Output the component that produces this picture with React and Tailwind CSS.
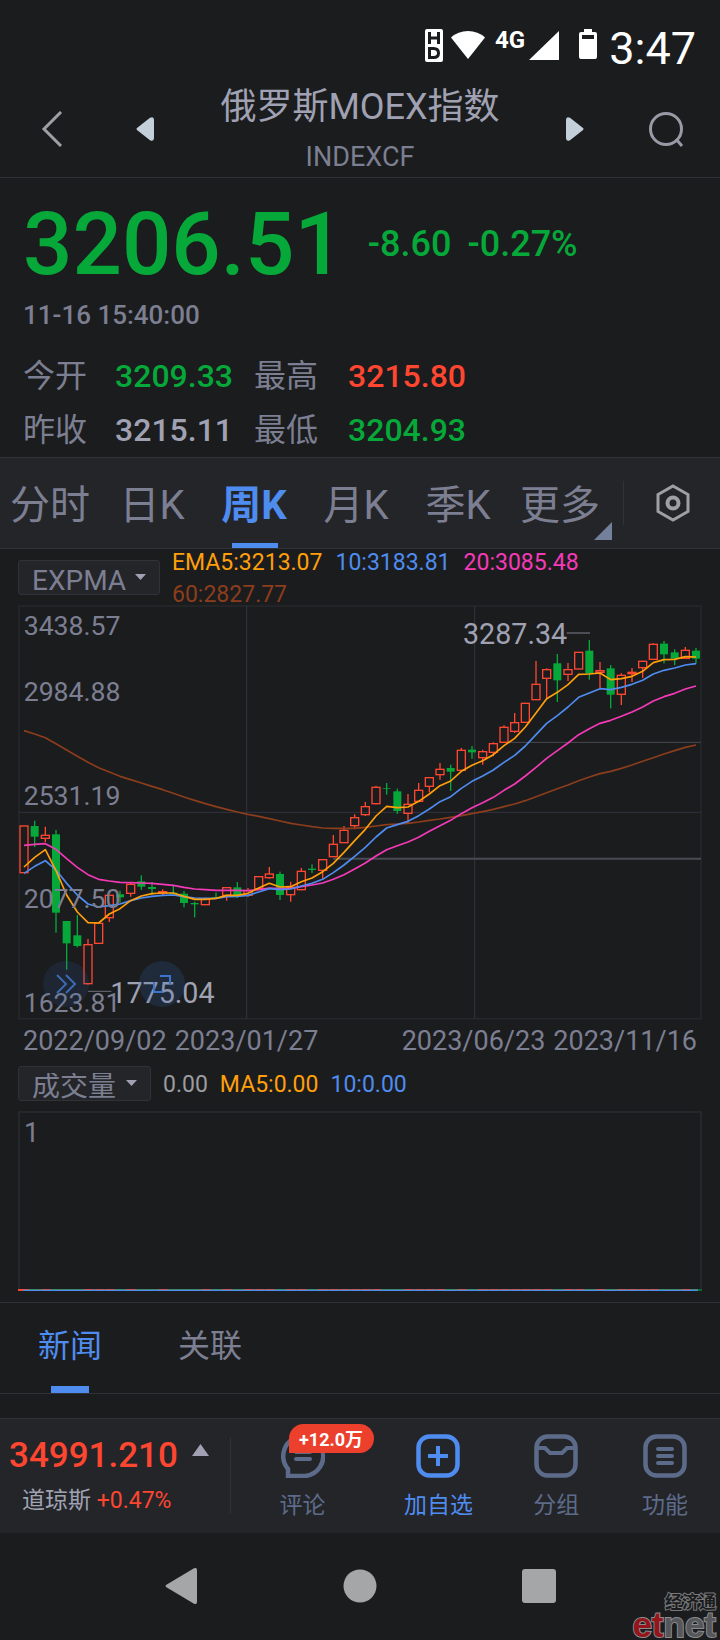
import React, { useState } from 'react';

// Each candle: [direction, wick top, body top, body bottom, wick bottom], one week per entry
const CANDLES = [
  ['up', 678, 678, 818, 818], ['down', 662, 678, 710, 741], ['up', 680, 706, 715, 727], ['down', 690, 703, 938, 998],
  ['down', 963, 963, 1030, 1109], ['down', 945, 1006, 1038, 1042], ['up', 1017, 1034, 1151, 1154], ['up', 970, 970, 1030, 1030],
  ['up', 886, 886, 953, 966], ['down', 872, 883, 892, 908], ['up', 850, 853, 880, 890], ['down', 826, 844, 860, 870],
  ['down', 846, 861, 867, 885], ['up', 868, 875, 879, 888], ['down', 857, 878, 883, 884], ['down', 873, 881, 909, 922],
  ['down', 905, 909, 913, 952], ['up', 893, 896, 914, 914], ['down', 878, 892, 895, 897], ['up', 862, 863, 886, 902],
  ['down', 846, 862, 885, 894], ['up', 864, 872, 886, 891], ['up', 828, 830, 866, 868], ['up', 801, 822, 833, 836],
  ['down', 815, 822, 885, 900], ['up', 845, 862, 884, 905], ['up', 804, 814, 869, 871], ['down', 793, 806, 810, 819],
  ['up', 777, 779, 811, 836], ['up', 705, 733, 770, 770], ['up', 678, 691, 728, 728], ['up', 643, 653, 677, 686],
  ['up', 606, 620, 644, 648], ['up', 557, 562, 611, 613], ['down', 549, 565, 567, 584], ['down', 566, 574, 633, 642],
  ['up', 582, 613, 640, 669], ['up', 549, 571, 604, 607], ['up', 531, 533, 559, 577], ['up', 489, 508, 524, 539],
  ['down', 494, 504, 515, 573], ['up', 444, 451, 511, 514], ['down', 438, 449, 457, 476], ['up', 449, 455, 473, 494],
  ['up', 427, 431, 457, 469], ['up', 376, 382, 427, 428], ['up', 339, 368, 394, 399], ['up', 310, 310, 367, 368],
  ['up', 183, 253, 299, 299], ['up', 205, 209, 235, 295], ['down', 162, 190, 241, 306], ['up', 189, 209, 223, 243],
  ['up', 156, 157, 207, 208], ['down', 120, 152, 221, 239], ['up', 186, 212, 217, 265], ['down', 195, 205, 284, 325],
  ['up', 220, 226, 283, 315], ['up', 204, 217, 221, 246], ['up', 182, 184, 203, 234], ['up', 130, 133, 178, 179],
  ['down', 123, 131, 163, 190], ['down', 148, 157, 176, 196], ['up', 141, 151, 175, 177], ['down', 144, 152, 176, 191]
];

const EMA5 = [
  801, 772, 749, 812, 885, 936, 968, 969, 942, 926, 902, 888, 881, 879, 879, 889, 898, 898, 895, 886, 886, 880,
  864, 850, 861, 860, 845, 834, 815, 790, 757, 722, 688, 648, 619, 623, 621, 604, 582, 557, 543, 514, 496, 482,
  464, 437, 415, 381, 339, 296, 277, 254, 223, 222, 219, 239, 236, 229, 214, 188, 179, 178, 170, 171
];

const EMA10 = [
  820, 799, 782, 810, 850, 885, 912, 921, 917, 912, 902, 894, 889, 886, 885, 890, 894, 895, 895, 890, 889, 886,
  876, 866, 869, 867, 858, 850, 838, 818, 795, 769, 742, 711, 684, 674, 664, 647, 627, 605, 590, 565, 544, 528,
  510, 487, 466, 438, 404, 370, 347, 321, 292, 279, 266, 269, 262, 253, 241, 222, 211, 204, 195, 191
];

const EMA20 = [
  736, 733, 731, 748, 776, 802, 824, 838, 843, 847, 848, 849, 850, 853, 856, 862, 867, 869, 871, 871, 871, 872,
  869, 864, 866, 865, 860, 855, 849, 838, 824, 807, 789, 768, 749, 737, 726, 712, 694, 677, 661, 641, 623, 608,
  592, 571, 552, 528, 502, 475, 452, 429, 404, 386, 370, 361, 349, 336, 321, 303, 290, 280, 267, 258
];

const EMA60 = [
  392, 402, 413, 431, 450, 469, 487, 503, 516, 529, 539, 549, 559, 569, 580, 591, 601, 611, 620, 628, 636, 643,
  649, 656, 663, 670, 675, 680, 684, 685, 685, 685, 682, 678, 674, 672, 670, 666, 661, 657, 652, 647, 641, 635,
  628, 620, 612, 602, 590, 578, 566, 555, 542, 531, 521, 514, 505, 495, 484, 473, 462, 452, 442, 435
];

const AXIS = [
  ['3438.57', 106],
  ['2984.88', 304],
  ['2531.19', 616],
  ['2077.50', 925],
  ['1623.81', 1237]
];

const PERIODS = ['分时', '日K', '周K', '月K', '季K', '更多'];

const candleX = (i) => 72 + i * 32;
const toPoints = (values) => values.map((y, i) => `${candleX(i)},${y}`).join(' ');

function StatusBar() {
  return (
    <div className="h-20 flex justify-end items-start pt-[29px] pr-6 text-white">
      <svg className="w-[18px] h-[33px]" viewBox="0 0 18 33">
        <rect width="18" height="33" rx="2" fill="#fff" />
        <path d="M4.500 3v12M13.500 3v12M4.500 9h9" stroke="#1b1c1e" strokeWidth="3" fill="none" />
        <path d="M4.500 19.500v9h4q5 0 5-4.500t-5-4.500z" stroke="#1b1c1e" strokeWidth="3" fill="none" />
      </svg>
      <svg className="w-[34px] h-[30px] ml-2" viewBox="0 0 34 30">
        <path d="M17 30L0 8.500Q7 2 17 2t17 6.500z" fill="#fff" />
      </svg>
      <span className="ml-2.5 text-2xl leading-[22px] font-bold">4G</span>
      <svg className="w-[30px] h-[31px] ml-1" viewBox="0 0 30 31">
        <path d="M30 2v29H0z" fill="#fff" />
      </svg>
      <svg className="w-[18px] h-[30px] ml-5" viewBox="0 0 18 30">
        <path d="M5 0h8v3h3q2 0 2 2v23q0 2-2 2H2q-2 0-2-2V5q0-2 2-2h3z" fill="#fff" />
        <path d="M3 6h12v4H3z" fill="#1b1c1e" />
      </svg>
      <span className="ml-3 text-[45px] leading-[39px]">3:47</span>
    </div>
  );
}

function Header() {
  return (
    <header className="h-[98px] border-b border-[#303238] flex items-center justify-between px-9">
      <div className="flex items-center gap-[68px]">
        <button type="button" aria-label="返回">
          <svg className="w-8 h-9" viewBox="0 0 32 36" fill="none" stroke="#a09fa6" strokeWidth="3">
            <path d="M25 1L8 18l17 17" />
          </svg>
        </button>
        <button type="button" aria-label="上一个">
          <svg className="w-[18px] h-6" viewBox="0 0 18 24" fill="#c3cfda">
            <path d="M1 11L14 .8Q18 -1 18 3v18q0 4-4 2.200L1 13q-1-1 0-2z" />
          </svg>
        </button>
      </div>
      <div className="text-center pt-1">
        <h1 className="text-4xl leading-[52px] text-[#a0a2b3]">俄罗斯MOEX指数</h1>
        <p className="text-[27px] leading-[48px] text-[#7c7f91]">INDEXCF</p>
      </div>
      <div className="flex items-center gap-16">
        <button type="button" aria-label="下一个">
          <svg className="w-[18px] h-6" viewBox="0 0 18 24" fill="#c3cfda">
            <path d="M17 11L4 .8Q0 -1 0 3v18q0 4 4 2.200L17 13q1-1 0-2z" />
          </svg>
        </button>
        <button type="button" aria-label="搜索">
          <svg className="w-9 h-9" viewBox="0 0 36 36" fill="none" stroke="#9a99a6" strokeWidth="3">
            <circle cx="18" cy="18" r="15.500" />
            <path d="M28 28l6 7" />
          </svg>
        </button>
      </div>
    </header>
  );
}

function Quote() {
  return (
    <section className="pt-[23px] px-[23px] font-medium">
      <div className="flex items-center text-[#06a839]">
        <span className="text-[87px] leading-[84px]">3206.51</span>
        <span className="text-[36px] leading-[86px] ml-6">-8.60</span>
        <span className="text-[36px] leading-[86px] ml-4">-0.27%</span>
      </div>
      <p className="mt-3 text-[26px] leading-8 text-[#7c7f91]">11-16 15:40:00</p>
      <dl className="mt-[18px] grid grid-cols-[92px_139px_94px_1fr] text-[32px] leading-[54px] text-[#06a839]">
        <dt className="font-normal text-[#7c7f91]">今开</dt>
        <dd>3209.33</dd>
        <dt className="font-normal text-[#7c7f91]">最高</dt>
        <dd className="text-[#fe4630]">3215.80</dd>
        <dt className="font-normal text-[#7c7f91]">昨收</dt>
        <dd className="text-[#a0a2b3]">3215.11</dd>
        <dt className="font-normal text-[#7c7f91]">最低</dt>
        <dd>3204.93</dd>
      </dl>
    </section>
  );
}

function PeriodTabs({ period, setPeriod }) {
  return (
    <nav className="h-[92px] flex items-center bg-[#242529] border-y border-[#303238]">
      <div className="h-full grow-[612] basis-0 grid grid-cols-6">
        {PERIODS.map((name) => (
          <button
            key={name}
            type="button"
            onClick={() => setPeriod(name)}
            className={`relative pt-1.5 pr-0.5 text-[40px] whitespace-nowrap ${
              period === name ? 'font-bold text-[#4f8cf0]' : 'text-[#7c7f91]'
            }`}
          >
            {name}
            {period === name && (
              <span className="absolute bottom-0 left-1/2 -translate-x-1/2 w-[46px] h-[5px] bg-[#4f8cf0]" />
            )}
            {name === '更多' && (
              <svg className="absolute right-0 bottom-2 w-[18px] h-[18px]" viewBox="0 0 18 18" fill="#73809b">
                <path d="M18 0v18H0z" />
              </svg>
            )}
          </button>
        ))}
      </div>
      <div className="grow-[108] basis-0 flex items-center justify-center">
        <span className="w-px h-11 bg-[#303238] mr-8" />
        <button type="button" aria-label="设置" className="mr-5">
          <svg className="w-[34px] h-[38px]" viewBox="0 0 34 38" fill="none" stroke="#a09fa6" strokeWidth="3">
            <path d="M17 2l15 8.500v17L17 36 2 27.500v-17z" />
            <circle cx="17" cy="19" r="5.500" strokeWidth="4" />
          </svg>
        </button>
      </div>
    </nav>
  );
}

function IndicatorSelect({ label, name, className }) {
  return (
    <div className="relative shrink-0">
      <select
        aria-label={label}
        className={`block appearance-none h-[35px] pl-[13px] pt-1.5 rounded-[3px] border border-[#303238] bg-[#242529] text-[28px] leading-7 text-[#7c7f91] ${className}`}
      >
        <option>{name}</option>
      </select>
      <svg className="absolute right-3.5 top-3.5 w-[11px] h-[6px] pointer-events-none" viewBox="0 0 11 6" fill="#a0a2b3">
        <path d="M0 0h11L5.500 6z" />
      </svg>
    </div>
  );
}

function PriceChart() {
  return (
    <div className="relative">
      {/* 3 units per pixel */}
      <svg className="block w-full" viewBox="54 15 2052 1245" fill="none">
        <rect x="57" y="18" width="2046" height="1238" stroke="#26272b" strokeWidth="5" />
        <path d="M740 18V1256M1424 18V1256M57 637H2103" stroke="#32333d" strokeWidth="3" />
        <path d="M1500 427H2103" stroke="#4a4a50" strokeWidth="3" />
        <path d="M1000 776H2103" stroke="#4a4b54" strokeWidth="6" />

        {CANDLES.map(([dir, high, top, bottom, low], i) => {
          const x = candleX(i);
          return dir === 'up' ? (
            <g key={i} stroke="#fe4630" strokeWidth="4">
              <path d={`M${x} ${high}V${top}M${x} ${bottom}V${low}`} />
              <rect x={x - 12} y={top} width="24" height={bottom - top} />
            </g>
          ) : (
            <g key={i} fill="#06a839">
              <rect x={x - 2} y={high} width="4" height={low - high} />
              <rect x={x - 12} y={top} width="24" height={bottom - top} />
            </g>
          );
        })}

        <g strokeWidth="5" strokeLinejoin="round">
          <polyline points={toPoints(EMA60)} stroke="#8b3d1c" />
          <polyline points={toPoints(EMA20)} stroke="#f53ab8" />
          <polyline points={toPoints(EMA10)} stroke="#4f8cf0" />
          <polyline points={toPoints(EMA5)} stroke="#ff9f0a" />
        </g>

        <g fill="#7c7f91" fontSize="80">
          {AXIS.map(([price, y]) => (
            <text key={price} x="71" y={y}>{price}</text>
          ))}
        </g>

        <path d="M1700 99h70M264 1174h70" stroke="#5d5e68" strokeWidth="4" />
        <g fill="#a0a2b3" fontSize="86">
          <text x="1389" y="132">3287.34</text>
          <text x="331" y="1210">1775.04</text>
        </g>
      </svg>

      <button type="button" aria-label="展开" className="absolute left-[25px] bottom-[13px] w-[46px] h-[46px] rounded-full bg-[#3363b0]/15">
        <svg viewBox="0 0 46 46" fill="none" stroke="#3b69b5" strokeWidth="2">
          <path d="M14 14l9 9-9 9M23 14l9 9-9 9" />
        </svg>
      </button>
      <button type="button" aria-label="全屏" className="absolute left-[121px] bottom-[13px] w-[46px] h-[46px] rounded-full bg-[#3363b0]/20">
        <svg viewBox="0 0 46 46" fill="none" stroke="#3b74cf" strokeWidth="2">
          <path d="M21 15h10v9M15 21v10h9" />
        </svg>
      </button>
    </div>
  );
}

function VolumeChart() {
  return (
    <svg className="block w-full" viewBox="0 0 684 180" fill="none">
      <path d="M1 180V1H683V180" stroke="#26272b" strokeWidth="2" />
      <path d="M0 178.500H684" stroke="#3f8570" />
      {CANDLES.map(([dir], i) => (
        dir === 'up' && <path key={i} d={`M${(candleX(i) - 66) / 3} 178.500h9`} stroke="#c25a5e" />
      ))}
      <path d="M4 179.500H680" stroke="#4f8cf0" />
      <path d="M0 179h5" stroke="#fe4630" strokeWidth="2" />
      <path d="M680 179h4" stroke="#0a6a2c" strokeWidth="2" />
      <text x="6" y="31" fill="#7c7f91" fontSize="27">1</text>
    </svg>
  );
}

function ToolButton({ label, active, children }) {
  return (
    <button
      type="button"
      className={`flex flex-col items-center text-[23px] leading-[56px] ${active ? 'text-[#4f8cf0]' : 'text-[#5d6b8a]'}`}
    >
      <span className="relative block">
        <svg className="w-11 h-11" viewBox="0 0 44 44" fill="none" stroke="currentColor" strokeWidth="4.5">
          {children}
        </svg>
        {label === '评论' && (
          <span className="absolute -top-2.5 left-2 w-[85px] h-[29px] rounded-[15px] rounded-bl-none bg-[#ec3f2c] text-white text-lg leading-8 font-bold">
            +12.0万
          </span>
        )}
      </span>
      {label}
    </button>
  );
}

function BottomBar() {
  return (
    <div className="h-[115px] flex bg-[#242529] border-t border-[#303238]">
      <div className="grow-[230] basis-0">
        <div className="pl-[9px] flex items-center gap-3.5 text-[#fe4630] text-[35px] leading-[73px] font-medium">
          34991.210
          <svg className="w-[17px] h-3 -mt-3" viewBox="0 0 17 12" fill="#a0a2b3">
            <path d="M8.500 0L17 12H0z" />
          </svg>
        </div>
        <div className="pl-[22px] text-[23px] leading-[18px] text-[#a0a2b3]">
          道琼斯 <span className="text-[#fe4630]">+0.47%</span>
        </div>
      </div>
      <div className="w-px h-[77px] mt-[18px] bg-[#303238]" />
      <div className="grow-[490] basis-0 pt-[15px] grid grid-cols-[144fr_128fr_108fr_110fr] items-start">
        <ToolButton label="评论">
          <path d="M7 42V35A20 20 0 1 1 24 42z" />
          <path d="M15 18h14M15 25h14" strokeWidth="4" strokeLinecap="round" />
        </ToolButton>
        <ToolButton label="加自选" active>
          <rect x="2.500" y="2.500" width="39" height="39" rx="11" />
          <path d="M22 12v20M12 22h20" strokeWidth="4" />
        </ToolButton>
        <ToolButton label="分组">
          <rect x="2.500" y="2.500" width="39" height="39" rx="11" />
          <path d="M3 14h8l5 5h12l5-5h8" strokeWidth="4" />
        </ToolButton>
        <ToolButton label="功能">
          <rect x="2.500" y="2.500" width="39" height="39" rx="11" />
          <path d="M15 15h14M15 22h14M15 29h14" strokeWidth="4" strokeLinecap="round" />
        </ToolButton>
      </div>
    </div>
  );
}

function SystemNav() {
  return (
    <div className="relative h-[107px] pb-0.5 flex items-center justify-center gap-[143px] overflow-hidden">
      <button type="button" aria-label="系统返回">
        <svg className="w-9 h-10" viewBox="0 0 36 40" fill="#a5a6a8">
          <path d="M3 19L31 2.300Q34 1 34 4v32q0 3-3 1.700L3 21q-1-1 0-2z" />
        </svg>
      </button>
      <button type="button" aria-label="主屏幕">
        <svg className="w-9 h-10" viewBox="0 0 36 40" fill="#a5a6a8">
          <circle cx="18" cy="20" r="16.500" />
        </svg>
      </button>
      <button type="button" aria-label="最近任务">
        <svg className="w-9 h-10" viewBox="0 0 36 40" fill="#a5a6a8">
          <rect x="1" y="3" width="34" height="34" rx="3" />
        </svg>
      </button>
      <div className="absolute right-1 bottom-0.5 text-right">
        <div className="text-[17px] leading-[18px] font-bold text-[#1b1c1e] [paint-order:stroke_fill] [-webkit-text-stroke:2px_#77787a]">经济通</div>
        <div className="font-['Liberation_Sans',sans-serif] text-[35px] leading-[27px] font-bold text-[#55575b] [paint-order:stroke_fill] [-webkit-text-stroke:2px_#8b8c8e]">
          <span className="text-[#94161c]">et</span>net
        </div>
      </div>
    </div>
  );
}

export default function App() {
  const [period, setPeriod] = useState('周K');
  const [tab, setTab] = useState('新闻');

  return (
    <div className="bg-[#1b1c1e] font-['Roboto','Noto_Sans_CJK_SC',sans-serif]">
      <StatusBar />
      <Header />
      <Quote />
      <PeriodTabs period={period} setPeriod={setPeriod} />

      <section className="px-[18px]">
        <div className="h-14 flex items-center gap-3">
          <IndicatorSelect label="主图指标" name="EXPMA" className="w-[142px]" />
          <div className="mt-1 flex flex-wrap gap-x-[13px] text-[23px] leading-8">
            <span className="text-[#ff9f0a]">EMA5:3213.07</span>
            <span className="text-[#4f8cf0]">10:3183.81</span>
            <span className="text-[#f53ab8]">20:3085.48</span>
            <span className="text-[#8b3d1c]">60:2827.77</span>
          </div>
        </div>
        <PriceChart />
        <div className="h-10 px-[5px] flex justify-between text-[27px] leading-[42px] text-[#7c7f91]">
          <div className="flex gap-2">
            <span>2022/09/02</span>
            <span>2023/01/27</span>
          </div>
          <div className="flex gap-2">
            <span>2023/06/23</span>
            <span>2023/11/16</span>
          </div>
        </div>
        <div className="h-[51px] pt-1.5 flex items-start gap-3">
          <IndicatorSelect label="副图指标" name="成交量" className="w-[133px]" />
          <div className="flex gap-3 text-[23px] leading-[38px]">
            <span className="text-[#9b9ca0]">0.00</span>
            <span className="text-[#ff9f0a]">MA5:0.00</span>
            <span className="text-[#4f8cf0]">10:0.00</span>
          </div>
        </div>
        <VolumeChart />
      </section>

      <nav className="mt-[11px] mb-6 h-[92px] flex border-y border-[#303238]">
        {['新闻', '关联'].map((name) => (
          <button
            key={name}
            type="button"
            onClick={() => setTab(name)}
            className={`relative w-[140px] pb-1 text-[32px] ${tab === name ? 'text-[#4f8cf0]' : 'text-[#7c7f91]'}`}
          >
            {name}
            {tab === name && (
              <span className="absolute bottom-0 left-1/2 -translate-x-1/2 w-[38px] h-[7px] bg-[#4f8cf0]" />
            )}
          </button>
        ))}
      </nav>

      <BottomBar />
      <SystemNav />
    </div>
  );
}
